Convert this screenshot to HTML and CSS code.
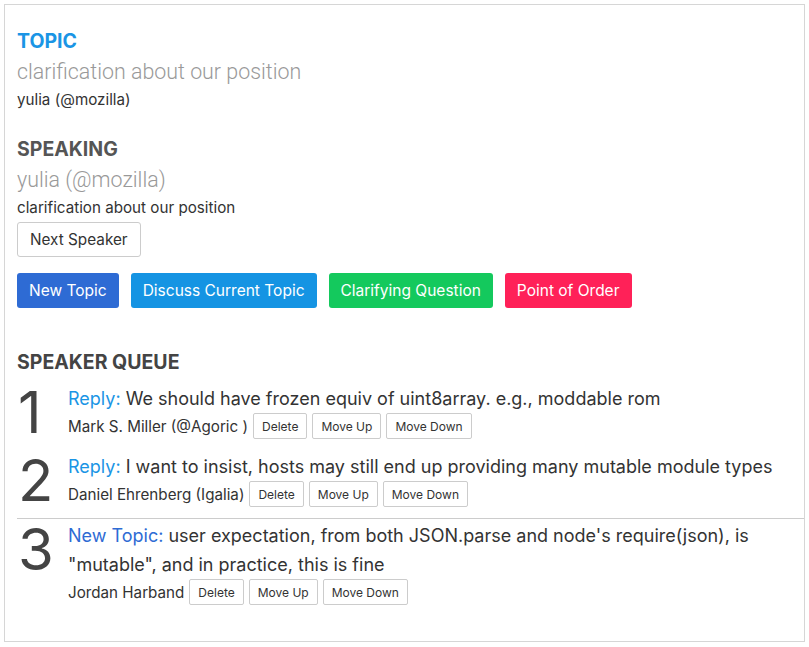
FILE: index.html
```html
<!DOCTYPE html>
<html lang="en">
<head>
    <meta charset="UTF-8">
    <meta name="viewport" content="width=device-width, initial-scale=1.0">
    <title>Speaker Queue</title>
    <link rel="stylesheet" href="styles.css">
</head>
<body>
    <div class="card">
        <section class="block">
            <h2 class="label topic-label">TOPIC</h2>
            <div class="headline">clarification about our position</div>
            <div class="byline">yulia (@mozilla)</div>
        </section>

        <section class="block speaking">
            <h2 class="label">SPEAKING</h2>
            <div class="headline">yulia (@mozilla)</div>
            <div class="byline">clarification about our position</div>
            <button class="btn-plain">Next Speaker</button>
        </section>

        <div class="actions">
            <button class="btn new-topic">New Topic</button>
            <button class="btn discuss">Discuss Current Topic</button>
            <button class="btn clarify">Clarifying Question</button>
            <button class="btn order">Point of Order</button>
        </div>

        <section class="queue">
            <h2 class="label queue-label">SPEAKER QUEUE</h2>

            <div class="item">
                <div class="num">1</div>
                <div class="body">
                    <div class="text"><span class="kind reply">Reply:</span> We should have frozen equiv of uint8array. e.g., moddable rom</div>
                    <div class="who">
                        <span class="name">Mark S. Miller (@Agoric )</span>
                        <button class="btn-small">Delete</button>
                        <button class="btn-small">Move Up</button>
                        <button class="btn-small">Move Down</button>
                    </div>
                </div>
            </div>

            <div class="item">
                <div class="num">2</div>
                <div class="body">
                    <div class="text"><span class="kind reply">Reply:</span> I want to insist, hosts may still end up providing many mutable module types</div>
                    <div class="who">
                        <span class="name">Daniel Ehrenberg (Igalia)</span>
                        <button class="btn-small">Delete</button>
                        <button class="btn-small">Move Up</button>
                        <button class="btn-small">Move Down</button>
                    </div>
                </div>
            </div>

            <div class="item new-group">
                <div class="num">3</div>
                <div class="body">
                    <div class="text"><span class="kind topic">New Topic:</span> user expectation, from both JSON.parse and node's require(json), is "mutable", and in practice, this is fine</div>
                    <div class="who">
                        <span class="name">Jordan Harband</span>
                        <button class="btn-small">Delete</button>
                        <button class="btn-small">Move Up</button>
                        <button class="btn-small">Move Down</button>
                    </div>
                </div>
            </div>
        </section>
    </div>
</body>
</html>
```

FILE: styles.css
```css
body {
    margin: 4px;
    background-color: #fff;
    font-family: Inter, "Noto Sans", sans-serif;
    color: #333;
}
.card {
    height: 638px;
    box-sizing: border-box;
    border: 1px solid #d6d6d6;
    box-shadow: 1px 1px 2px rgba(0, 0, 0, 0.15);
    padding: 24px 0 0 12px;
}
.label {
    margin: 0;
    font-size: 19.5px;
    font-weight: 700;
    line-height: 24px;
    color: #555;
}
.topic-label {
    color: #1a95e5;
}
.headline {
    margin-top: 3px;
    font-family: Roboto, Inter, sans-serif;
    font-size: 21.4px;
    font-weight: 300;
    color: #999;
    line-height: 32px;
}
.byline {
    font-size: 15.2px;
    line-height: 24px;
    color: #333;
}
.speaking {
    margin-top: 25px;
}
.btn-plain {
    margin-top: 2px;
    font-family: inherit;
    font-size: 15.3px;
    color: #333;
    background-color: #fff;
    border: 1px solid #ccc;
    border-radius: 3px;
    height: 35px;
    padding: 0 12px;
}
.actions {
    display: flex;
    gap: 12px;
    margin-top: 16px;
}
.btn {
    font-family: inherit;
    font-size: 15.5px;
    color: #fff;
    border: none;
    border-radius: 3px;
    height: 35px;
    padding: 0 12px;
}
.new-topic { background-color: #2e6bd4; }
.discuss { background-color: #1594e3; }
.clarify { background-color: #14c95d; }
.order { background-color: #ff2158; }

.queue {
    margin-top: 42px;
}
.queue-label {
    color: #444;
    margin-bottom: 4px;
}
.item {
    display: flex;
    padding: 6px 0;
}
.new-group {
    margin-top: 4px;
    padding-top: 2px;
    border-top: 1px solid #ccc;
}
.num {
    width: 51px;
    flex: none;
    font-size: 58px;
    font-weight: 400;
    line-height: 56px;
    color: #444;
    padding-left: 1px;
    box-sizing: border-box;
}
.body {
    flex: 1;
}
.text {
    font-size: 18px;
    line-height: 29px;
    color: #333;
}
.kind.reply { color: #1a95e5; }
.kind.topic { color: #2e6bd4; }
.who {
    display: flex;
    align-items: center;
    gap: 5px;
}
.name {
    font-size: 15.2px;
    color: #333;
}
.btn-small {
    font-family: inherit;
    font-size: 12px;
    color: #333;
    background-color: #fff;
    border: 1px solid #ccc;
    border-radius: 2px;
    height: 26px;
    padding: 0 8px;
}
```
